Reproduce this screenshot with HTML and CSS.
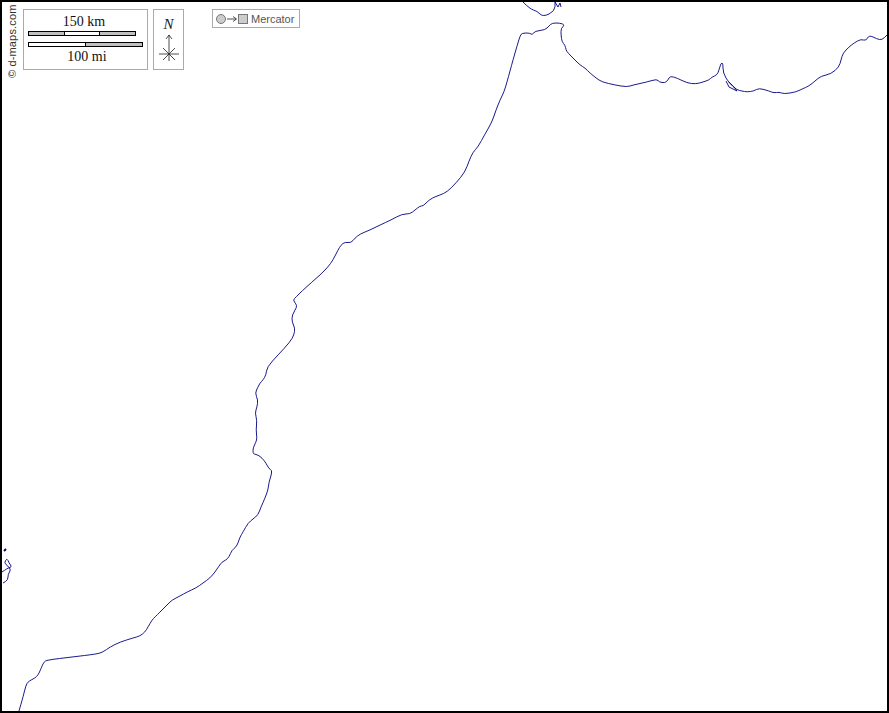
FILE: index.html
```html
<!DOCTYPE html>
<html lang="en">
<head>
    <meta charset="UTF-8">
    <meta name="viewport" content="width=device-width, initial-scale=1.0">
    <title>Morocco coast blank map</title>
    <link rel="stylesheet" href="styles.css">
</head>
<body>
    <div class="map">
        <svg class="coast" width="885" height="709" viewBox="2 2 885 709">
            <!-- Atlantic and Mediterranean shore -->
            <polyline points="19,711 21,704 23,697 26,685 28,682 31,680 35,678 38,675 40,671 42,666 44,662 47,660 72,657 97,654 103,652 110,647 120,642 133,638 140,636 145,632 148,627 152,620 155,617 160,612 164,608 168,604 172,600 180,596 187,592 196,588 203,583 210,578 215,572 219,566 222,562 226,560 229,557 232,550 236,547 238,543 240,537 243,532 248,523 253,519 258,515 261,507 265,498 268,490 269,482 271,476 272,470 269,469 266,463 262,458 258,455 254,454 253,453 253,448 256,442 257,438 256,430 257,420 255,413 257,407 258,400 255,393 258,387 260,383 263,380 266,375 267,367 278,355 290,342 294,335 295,328 292,322 292,315 297,307 296,304 293,300 296,297 302,291 312,282 320,275 328,267 333,260 338,250 341,245 345,242 351,243 355,238 360,234 370,230 380,225 391,220 402,214 410,214 415,210 420,206 423,206 427,202 432,198 440,195 447,192 456,183 465,172 469,161 473,152 478,147 485,134 492,122 496,110 500,100 504,92 507,82 510,71 513,60 517,46 520,36 522,33 530,33 532,35 535,31 545,30 549,26 552,23 560,23 565,25 561,28 561,35 562,42 565,45 566,50 568,53 574,59 580,65 585,68 590,73 596,78 602,82 615,85 627,87 633,85 647,82 657,79 659,82 665,83 668,80 670,76 677,78 687,83 696,84 703,82 709,80 712,77 717,75 719,70 721,63 723,63 723,73 729,83 737,90 742,91 747,92 754,91 759,88 769,91 774,93 779,92 784,94 796,92 802,89 809,86 815,81 821,76 831,74 839,67 841,60 843,53 849,47 854,43 861,39 866,41 869,35 877,39 882,40 887,35"/>
            <!-- lagoon -->
            <polyline class="sharp" points="726,81 729,87 737,91 734,87 729,82"/>
            <!-- north shore at the top edge -->
            <polyline points="523,2 530,9 537,11 543,17 555,11 555,2"/>
            <polyline class="sharp" points="555,2 558,7 560,3 561,7"/>
            <!-- islands on the left edge -->
            <polyline points="2,572 5,570 8,568 12,567 9,563 7,558 4,563 8,566 11,570 8,574 8,580 3,583"/>
            <polyline class="sharp islet" points="4,551 6,549"/>
        </svg>

        <div class="credit">© d-maps.com</div>

        <div class="legend">
            <div class="scale">
                <div class="scale-label label-km">150 km</div>
                <div class="bar bar-km">
                    <span class="seg grey"></span><span class="seg"></span><span class="seg grey"></span>
                </div>
                <div class="bar bar-mi">
                    <span class="seg"></span><span class="seg grey"></span>
                </div>
                <div class="scale-label label-mi">100 mi</div>
            </div>

            <div class="compass">
                <div class="north">N</div>
                <svg width="22" height="28" viewBox="0 0 22 28">
                    <path d="M11 1V27M8 5L11 1L14 5M1 20H21M5 14L17 26M17 14L5 26" />
                </svg>
            </div>

            <div class="projection">
                <span class="globe"></span>
                <svg class="arrow" width="10" height="8" viewBox="0 0 10 8">
                    <path d="M0 4H9M6 1.5L9.5 4L6 6.5" />
                </svg>
                <span class="sheet"></span>
                <span class="proj-name">Mercator</span>
            </div>
        </div>
    </div>
    <script src="script.js"></script>
</body>
</html>
```

FILE: styles.css
```css
html, body {
    margin: 0;
    padding: 0;
    background-color: white;
}
.map {
    position: relative;
    box-sizing: border-box;
    width: 889px;
    height: 713px;
    border: 2px solid black;
    background-color: white;
    overflow: hidden;
}
.coast {
    position: absolute;
    left: 0;
    top: 0;
}
.coast polyline, .coast path {
    fill: none;
    stroke: #000080;
    stroke-width: 0.9;
    stroke-linejoin: round;
}
.coast .islet {
    stroke-width: 2;
}
.credit {
    position: absolute;
    left: 4px;
    top: 76px;
    transform-origin: 0 0;
    transform: rotate(-90deg);
    font-family: "Liberation Sans", Arial, sans-serif;
    font-size: 11px;
    line-height: 13px;
    letter-spacing: 0.15px;
    color: #333;
    white-space: nowrap;
}
.legend {
    position: absolute;
    left: 21px;
    top: 7px;
    display: flex;
    align-items: flex-start;
}
.scale {
    box-sizing: border-box;
    width: 125px;
    height: 61px;
    padding: 4px 4px 0;
    border: 1px solid #aaa;
    background-color: white;
}
.scale-label {
    height: 16px;
    font-family: "Liberation Serif", "Times New Roman", serif;
    font-size: 14px;
    line-height: 16px;
    text-align: center;
    color: #111;
}
.label-km {
    width: 112px;
}
.label-mi {
    margin-top: 1px;
    margin-left: 3px;
}
.bar {
    display: flex;
    box-sizing: border-box;
    height: 5px;
    border: 1px solid black;
}
.bar-km {
    width: 108px;
    margin-top: 1px;
}
.bar-mi {
    width: 115px;
    margin-top: 6px;
    margin-bottom: 2px;
}
.seg {
    flex: 1;
    background-color: white;
    border-right: 1px solid black;
}
.seg:last-child {
    border-right: none;
}
.seg.grey {
    background-color: #c0c0c0;
}
.compass {
    box-sizing: border-box;
    width: 31px;
    height: 61px;
    margin-left: 5px;
    border: 1px solid #aaa;
    display: flex;
    flex-direction: column;
    align-items: center;
}
.north {
    height: 22px;
    font-family: "Liberation Serif", "Times New Roman", serif;
    font-style: italic;
    font-size: 15px;
    line-height: 28px;
    color: #222;
}
.compass svg {
    margin-top: 2px;
}
.compass path {
    fill: none;
    stroke: #222;
    stroke-width: 0.8;
}
.projection {
    box-sizing: border-box;
    display: flex;
    align-items: center;
    width: 88px;
    height: 19px;
    margin-left: 28px;
    padding-left: 3px;
    border: 1px solid #aaa;
    font-family: "Liberation Sans", Arial, sans-serif;
    font-size: 11px;
    color: #555;
}
.globe {
    box-sizing: border-box;
    width: 10px;
    height: 10px;
    border: 1px solid #777;
    border-radius: 50%;
    background-color: #ccc;
}
.arrow {
    margin-left: 1px;
}
.arrow path {
    fill: none;
    stroke: #222;
    stroke-width: 0.8;
}
.sheet {
    box-sizing: border-box;
    width: 10px;
    height: 10px;
    margin-left: 1px;
    border: 1px solid #777;
    background-color: #ccc;
}
.proj-name {
    margin-left: 3px;
}
```

FILE: script.js
```js
// round the coast: each vertex becomes the control point of a curve between midpoints
document.querySelectorAll('.coast polyline:not(.sharp)').forEach(function(line) {
    const pts = line.getAttribute('points').trim().split(/\s+/).map(function(p) {
        return p.split(',').map(Number);
    });
    let d = 'M' + pts[0].join(' ');
    for (let i = 1; i < pts.length - 1; i++) {
        const midX = (pts[i][0] + pts[i + 1][0]) / 2;
        const midY = (pts[i][1] + pts[i + 1][1]) / 2;
        d += 'Q' + pts[i].join(' ') + ' ' + midX + ' ' + midY;
    }
    d += 'L' + pts[pts.length - 1].join(' ');
    const path = document.createElementNS('http://www.w3.org/2000/svg', 'path');
    path.setAttribute('d', d);
    line.replaceWith(path);
});
```
